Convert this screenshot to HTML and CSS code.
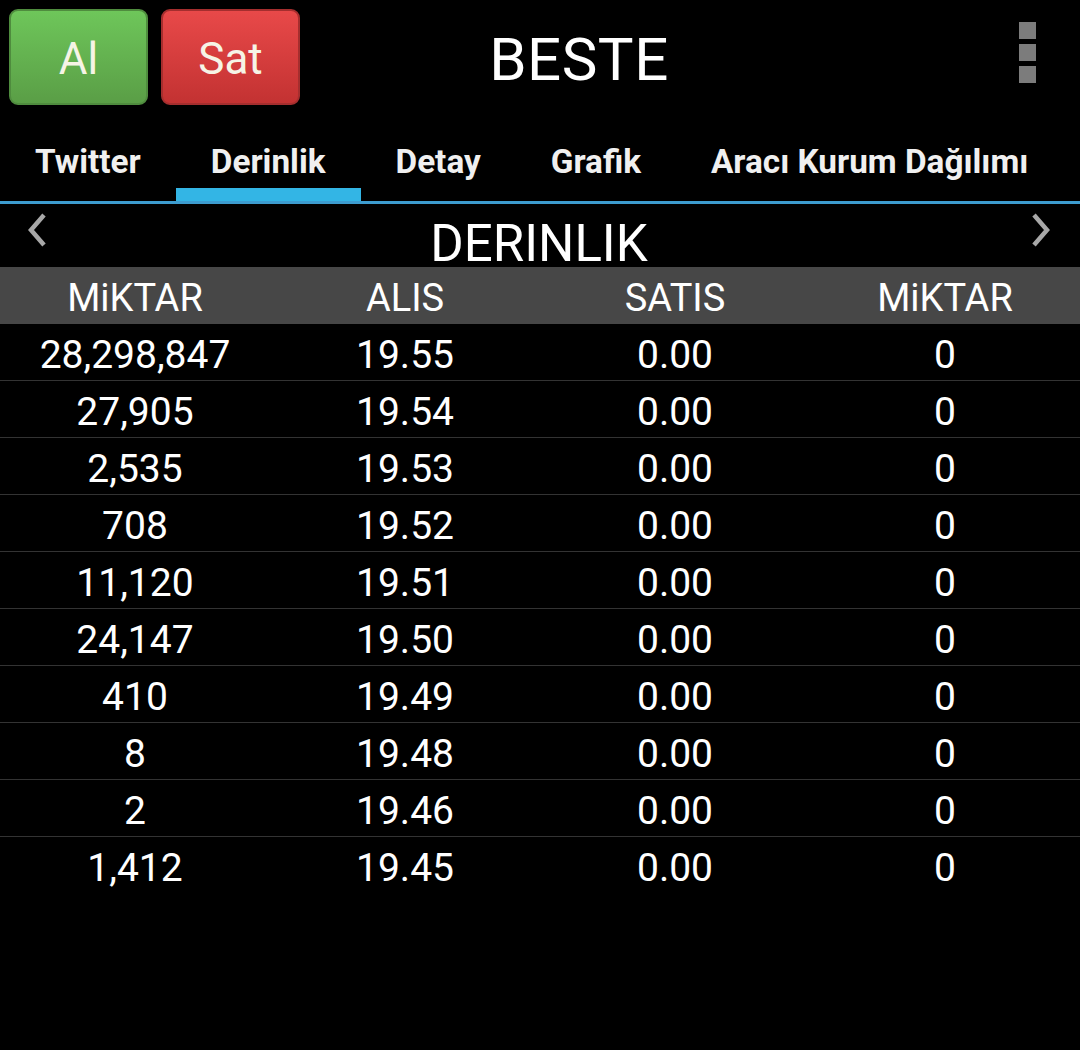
FILE: index.html
```html
<!DOCTYPE html>
<html>
<head>
<meta charset="utf-8">
<link rel="stylesheet" href="styles.css">
</head>
<body>
<div class="topbar">
  <button class="btn btn-buy">Al</button>
  <button class="btn btn-sell">Sat</button>
  <div class="title">BESTE</div>
  <div class="menu">
    <div class="dots"><span></span><span></span><span></span></div>
  </div>
</div>
<div class="tabs">
  <div class="tab">Twitter</div>
  <div class="tab active">Derinlik</div>
  <div class="tab">Detay</div>
  <div class="tab">Grafik</div>
  <div class="tab">Aracı Kurum Dağılımı</div>
</div>
<div class="section">
  <svg class="chev" width="30" height="44" viewBox="0 0 30 44"><path d="M22 5 L9 20 L22 35" fill="none" stroke="#a8a8a8" stroke-width="4.5"/></svg>
  <div class="section-title">DERINLIK</div>
  <svg class="chev" width="30" height="44" viewBox="0 0 30 44"><path d="M8 5 L21 20 L8 35" fill="none" stroke="#a8a8a8" stroke-width="4.5"/></svg>
</div>
<div class="table">
  <div class="row head"><div>MiKTAR</div><div>ALIS</div><div>SATIS</div><div>MiKTAR</div></div>
  <div class="row"><div>28,298,847</div><div>19.55</div><div>0.00</div><div>0</div></div>
  <div class="row"><div>27,905</div><div>19.54</div><div>0.00</div><div>0</div></div>
  <div class="row"><div>2,535</div><div>19.53</div><div>0.00</div><div>0</div></div>
  <div class="row"><div>708</div><div>19.52</div><div>0.00</div><div>0</div></div>
  <div class="row"><div>11,120</div><div>19.51</div><div>0.00</div><div>0</div></div>
  <div class="row"><div>24,147</div><div>19.50</div><div>0.00</div><div>0</div></div>
  <div class="row"><div>410</div><div>19.49</div><div>0.00</div><div>0</div></div>
  <div class="row"><div>8</div><div>19.48</div><div>0.00</div><div>0</div></div>
  <div class="row"><div>2</div><div>19.46</div><div>0.00</div><div>0</div></div>
  <div class="row last"><div>1,412</div><div>19.45</div><div>0.00</div><div>0</div></div>
</div>
</body>
</html>
```
FILE: styles.css
```css
html, body {
  margin: 0;
  padding: 0;
  background: #000;
  color: #fff;
  font-family: Roboto, "Noto Sans", sans-serif;
}
.topbar {
  height: 107px;
  display: flex;
  align-items: flex-start;
  padding-left: 9px;
  box-sizing: border-box;
}
.btn {
  margin-top: 9px;
  width: 139px;
  height: 96px;
  border-radius: 9px;
  font-family: Roboto, sans-serif;
  font-size: 44px;
  color: #f6f4e6;
  padding: 4px 0 0;
  box-sizing: border-box;
}
.btn-buy {
  background: linear-gradient(#6ec65a, #5a9e46);
  border: 2px solid #4f8c3e;
}
.btn-sell {
  margin-left: 13px;
  background: linear-gradient(#e84949, #c33232);
  border: 2px solid #a52e2e;
}
.title {
  flex: 1;
  text-align: center;
  font-size: 60px;
  line-height: 120px;
  height: 107px;
  letter-spacing: 0.5px;
}
.menu {
  width: 222px;
  display: flex;
  justify-content: flex-end;
  padding-right: 44px;
  box-sizing: border-box;
  padding-top: 22px;
}
.dots {
  display: flex;
  flex-direction: column;
  gap: 5px;
}
.dots span {
  width: 17px;
  height: 17px;
  background: #7c7c7c;
  display: block;
}
.tabs {
  display: flex;
  height: 97px;
  border-bottom: 3px solid #3d9ccf;
  box-sizing: border-box;
}
.tab {
  padding: 37px 35px 0;
  font-size: 33.3px;
  line-height: 36px;
  font-weight: bold;
  color: #f0f0f0;
  white-space: nowrap;
}
.tab.active {
  box-shadow: inset 0 -13px 0 #33b5e5;
}
.section {
  height: 63px;
  display: flex;
  align-items: center;
  padding: 0 24px 0 22px;
}
.chev {
  display: block;
  margin-top: -8px;
}
.section-title {
  flex: 1;
  text-align: center;
  font-size: 51px;
  line-height: 63px;
  padding-top: 8px;
  height: 63px;
  box-sizing: border-box;
}
.row {
  display: grid;
  grid-template-columns: repeat(4, 1fr);
  height: 57px;
  border-bottom: 1px solid #333;
  box-sizing: border-box;
  font-size: 39px;
  line-height: 57px;
  padding-top: 3px;
  text-align: center;
}
.row.head {
  background: #474747;
  border-bottom: none;
  font-size: 38px;
}
.row.last {
  border-bottom: none;
}
```
